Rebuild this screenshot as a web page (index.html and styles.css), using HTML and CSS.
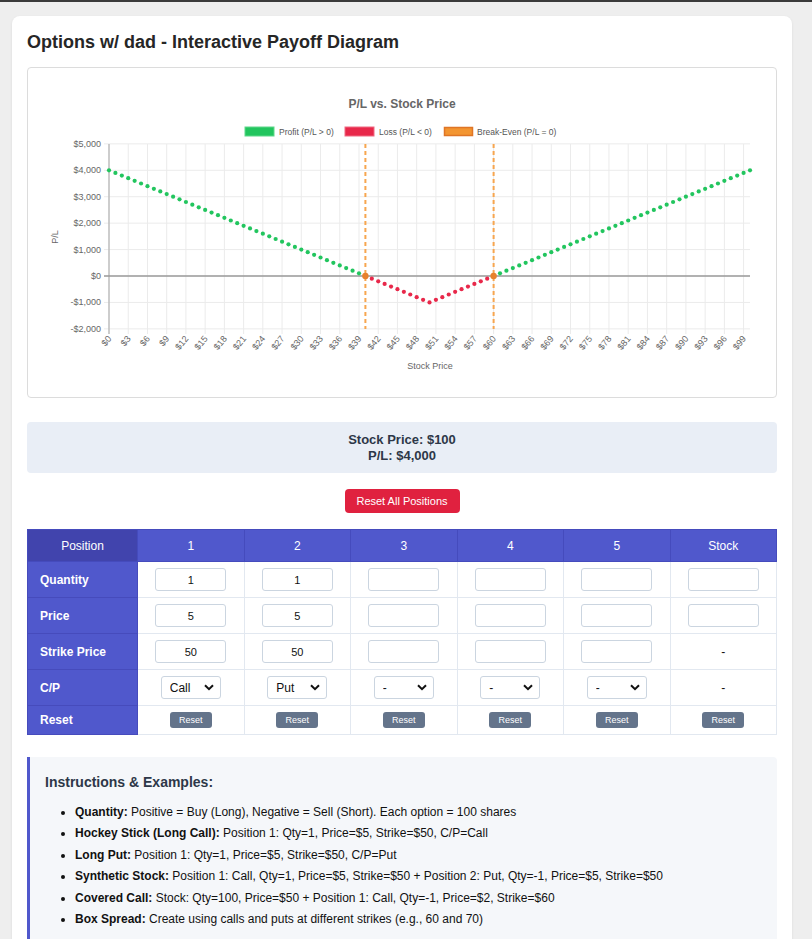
FILE: index.html
```html
<!DOCTYPE html>
<html lang="en">
<head>
<meta charset="utf-8">
<title>Options w/ dad - Interactive Payoff Diagram</title>
<link rel="stylesheet" href="styles.css">
</head>
<body>
<div class="card">
  <h1 class="page-title">Options w/ dad - Interactive Payoff Diagram</h1>

  <div class="chart-box">
    <svg id="chart" class="chart" width="748" height="329" viewBox="0 0 748 329" xmlns="http://www.w3.org/2000/svg">
      <text x="374" y="40" class="c-title" text-anchor="middle">P/L vs. Stock Price</text>
      <rect x="217" y="59" width="29" height="9" fill="#22c55e" stroke="#5ed88a" stroke-width="1"/>
      <text x="251" y="66.5" class="c-legend">Profit (P/L &gt; 0)</text>
      <rect x="317" y="59" width="29" height="9" fill="#e8284a" stroke="#f06a82" stroke-width="1"/>
      <text x="351" y="66.5" class="c-legend">Loss (P/L &lt; 0)</text>
      <rect x="416.5" y="59.5" width="28" height="8" fill="#f39531" stroke="#df7526" stroke-width="1.5"/>
      <text x="449" y="66.5" class="c-legend">Break-Even (P/L = 0)</text>
      <text x="30" y="169" class="c-axis-title" text-anchor="middle" transform="rotate(-90 30 169)">P/L</text>
      <text x="402" y="301" class="c-axis-title" text-anchor="middle">Stock Price</text>
    </svg>
  </div>

  <div class="info-box">
    <div>Stock Price: $100</div>
    <div>P/L: $4,000</div>
  </div>

  <div class="reset-all-wrap">
    <button class="btn-reset-all">Reset All Positions</button>
  </div>

  <table class="positions">
    <colgroup>
      <col class="col-label">
      <col><col><col><col><col><col>
    </colgroup>
    <thead>
      <tr>
        <th class="th-corner">Position</th>
        <th>1</th><th>2</th><th>3</th><th>4</th><th>5</th><th>Stock</th>
      </tr>
    </thead>
    <tbody>
      <tr>
        <td class="row-label">Quantity</td>
        <td><input class="num" type="text" value="1"></td>
        <td><input class="num" type="text" value="1"></td>
        <td><input class="num" type="text" value=""></td>
        <td><input class="num" type="text" value=""></td>
        <td><input class="num" type="text" value=""></td>
        <td><input class="num" type="text" value=""></td>
      </tr>
      <tr>
        <td class="row-label">Price</td>
        <td><input class="num" type="text" value="5"></td>
        <td><input class="num" type="text" value="5"></td>
        <td><input class="num" type="text" value=""></td>
        <td><input class="num" type="text" value=""></td>
        <td><input class="num" type="text" value=""></td>
        <td><input class="num" type="text" value=""></td>
      </tr>
      <tr>
        <td class="row-label">Strike Price</td>
        <td><input class="num" type="text" value="50"></td>
        <td><input class="num" type="text" value="50"></td>
        <td><input class="num" type="text" value=""></td>
        <td><input class="num" type="text" value=""></td>
        <td><input class="num" type="text" value=""></td>
        <td class="dash">-</td>
      </tr>
      <tr>
        <td class="row-label">C/P</td>
        <td><span class="sel-wrap"><select class="sel"><option>Call</option><option>Put</option><option>-</option></select><svg class="chev" width="10" height="7" viewBox="0 0 10 7"><path d="M1 1.2 L5 5.2 L9 1.2" fill="none" stroke="#111" stroke-width="2"/></svg></span></td>
        <td><span class="sel-wrap"><select class="sel"><option>Put</option><option>Call</option><option>-</option></select><svg class="chev" width="10" height="7" viewBox="0 0 10 7"><path d="M1 1.2 L5 5.2 L9 1.2" fill="none" stroke="#111" stroke-width="2"/></svg></span></td>
        <td><span class="sel-wrap"><select class="sel"><option>-</option><option>Call</option><option>Put</option></select><svg class="chev" width="10" height="7" viewBox="0 0 10 7"><path d="M1 1.2 L5 5.2 L9 1.2" fill="none" stroke="#111" stroke-width="2"/></svg></span></td>
        <td><span class="sel-wrap"><select class="sel"><option>-</option><option>Call</option><option>Put</option></select><svg class="chev" width="10" height="7" viewBox="0 0 10 7"><path d="M1 1.2 L5 5.2 L9 1.2" fill="none" stroke="#111" stroke-width="2"/></svg></span></td>
        <td><span class="sel-wrap"><select class="sel"><option>-</option><option>Call</option><option>Put</option></select><svg class="chev" width="10" height="7" viewBox="0 0 10 7"><path d="M1 1.2 L5 5.2 L9 1.2" fill="none" stroke="#111" stroke-width="2"/></svg></span></td>
        <td class="dash">-</td>
      </tr>
      <tr class="reset-row">
        <td class="row-label">Reset</td>
        <td><button class="btn-reset">Reset</button></td>
        <td><button class="btn-reset">Reset</button></td>
        <td><button class="btn-reset">Reset</button></td>
        <td><button class="btn-reset">Reset</button></td>
        <td><button class="btn-reset">Reset</button></td>
        <td><button class="btn-reset">Reset</button></td>
      </tr>
    </tbody>
  </table>

  <div class="instructions">
    <h3 class="instr-title">Instructions &amp; Examples:</h3>
    <ul class="instr-list">
      <li><strong>Quantity:</strong> Positive = Buy (Long), Negative = Sell (Short). Each option = 100 shares</li>
      <li><strong>Hockey Stick (Long Call):</strong> Position 1: Qty=1, Price=$5, Strike=$50, C/P=Call</li>
      <li><strong>Long Put:</strong> Position 1: Qty=1, Price=$5, Strike=$50, C/P=Put</li>
      <li><strong>Synthetic Stock:</strong> Position 1: Call, Qty=1, Price=$5, Strike=$50 + Position 2: Put, Qty=-1, Price=$5, Strike=$50</li>
      <li><strong>Covered Call:</strong> Stock: Qty=100, Price=$50 + Position 1: Call, Qty=-1, Price=$2, Strike=$60</li>
      <li><strong>Box Spread:</strong> Create using calls and puts at different strikes (e.g., 60 and 70)</li>
    </ul>
  </div>
</div>
<script src="script.js"></script>
</body>
</html>
```

FILE: styles.css
```css
html, body {
  margin: 0;
  padding: 0;
}
body {
  background: #eeeeee;
  border-top: 2px solid #3a3a3a;
  padding: 14px 20px 20px 12px;
  font-family: "Liberation Sans", Arial, sans-serif;
  color: #222;
}
.card {
  background: #ffffff;
  border-radius: 8px;
  box-shadow: 0 1px 3px rgba(0, 0, 0, 0.08);
  padding: 15px 15px 20px 15px;
}
.page-title {
  margin: 0 0 14px 0;
  font-size: 18px;
  line-height: 22px;
  font-weight: bold;
  color: #262626;
}
.chart-box {
  border: 1px solid #dcdcdc;
  border-radius: 4px;
  height: 329px;
  margin-bottom: 24px;
}
.chart {
  display: block;
}
.c-title {
  font-family: "Liberation Sans", Arial, sans-serif;
  font-size: 12px;
  font-weight: bold;
  fill: #666666;
}
.c-legend {
  font-family: "Liberation Sans", Arial, sans-serif;
  font-size: 8.5px;
  fill: #555555;
}
.c-tick {
  font-family: "Liberation Sans", Arial, sans-serif;
  font-size: 9px;
  fill: #666666;
}
.c-axis-title {
  font-family: "Liberation Sans", Arial, sans-serif;
  font-size: 9px;
  fill: #666666;
}
.info-box {
  background: #e9eef6;
  border-radius: 4px;
  padding: 10px;
  height: 31px;
  text-align: center;
  font-weight: bold;
  font-size: 13px;
  line-height: 15.5px;
  color: #2d3748;
  margin-bottom: 16px;
}
.reset-all-wrap {
  display: flex;
  justify-content: center;
  margin-bottom: 16px;
}
.btn-reset-all {
  background: #e0213f;
  color: #ffffff;
  border: none;
  border-radius: 4px;
  height: 24px;
  width: 115px;
  font-family: "Liberation Sans", Arial, sans-serif;
  font-size: 11px;
  padding: 0;
}
.positions {
  width: 100%;
  border-collapse: collapse;
  table-layout: fixed;
  margin-bottom: 22px;
}
.col-label {
  width: 110px;
}
.positions th {
  background: #5058cc;
  color: #ffffff;
  font-weight: normal;
  font-size: 12px;
  height: 31px;
  padding: 0;
  border: 1px solid #454bbd;
  text-align: center;
}
.positions th.th-corner {
  background: #4144ad;
}
.positions td {
  border: 1px solid #e2e8f0;
  height: 35px;
  padding: 0;
  text-align: center;
  font-size: 12px;
}
.positions td.row-label {
  background: #5058cc;
  color: #ffffff;
  font-weight: bold;
  text-align: left;
  padding-left: 12px;
  border: 1px solid #464bbc;
}
.positions tr.reset-row td {
  height: 28px;
}
.positions td.dash {
  color: #111;
}
.num {
  box-sizing: border-box;
  width: 71px;
  height: 23px;
  border: 1px solid #cbd5e0;
  border-radius: 3px;
  text-align: center;
  font-family: "Liberation Sans", Arial, sans-serif;
  font-size: 11px;
  color: #111;
  padding: 0;
  vertical-align: middle;
  background: #fff;
}
.sel-wrap {
  position: relative;
  display: inline-block;
  vertical-align: middle;
}
.sel {
  -webkit-appearance: none;
  appearance: none;
  box-sizing: border-box;
  width: 60px;
  height: 23px;
  border: 1px solid #cbd5e0;
  border-radius: 3px;
  background: #ffffff;
  font-family: "Liberation Sans", Arial, sans-serif;
  font-size: 12px;
  color: #111;
  padding: 0 0 0 8px;
  display: block;
}
.chev {
  position: absolute;
  right: 7px;
  top: 8px;
  pointer-events: none;
}
.btn-reset {
  background: #64748b;
  color: #ffffff;
  border: none;
  border-radius: 3px;
  width: 42px;
  height: 16px;
  font-family: "Liberation Sans", Arial, sans-serif;
  font-size: 9px;
  padding: 0;
  vertical-align: middle;
}
.instructions {
  background: #f5f7fa;
  border-left: 3px solid #5058cc;
  border-radius: 0 4px 4px 0;
  padding: 16px 15px 16px 15px;
}
.instr-title {
  margin: 0;
  font-size: 14px;
  line-height: 18px;
  font-weight: bold;
  color: #2d3748;
}
.instr-list {
  margin: 11px 0 0 0;
  padding-left: 30px;
  font-size: 12px;
  line-height: 21.4px;
  color: #111;
}
.instr-list strong {
  color: #111;
}
```

FILE: script.js
```js
(function () {
  var svg = document.getElementById('chart');
  var NS = 'http://www.w3.org/2000/svg';
  var x0 = 81, dx = 6.41, yZero = 208, per = 26.43;
  function X(i) { return x0 + i * dx; }
  function Y(v) { return yZero - v / 1000 * per; }
  function fmt(v) {
    var a = Math.abs(v);
    var s = a >= 1000 ? Math.floor(a / 1000) + ',' + ('00' + (a % 1000)).slice(-3) : String(a);
    return (v < 0 ? '-' : '') + '$' + s;
  }
  var g = document.createElementNS(NS, 'g');
  svg.appendChild(g);
  function add(tag, attrs, text) {
    var e = document.createElementNS(NS, tag);
    for (var k in attrs) e.setAttribute(k, attrs[k]);
    if (text !== undefined) e.textContent = text;
    g.appendChild(e);
    return e;
  }
  for (var v = -2000; v <= 5000; v += 1000) {
    var y = Y(v);
    add('line', { x1: 76, x2: 722, y1: y, y2: y, stroke: '#ebebeb', 'stroke-width': 1 });
    add('text', { x: 73, y: y + 3, 'class': 'c-tick', 'text-anchor': 'end' }, fmt(v));
  }
  for (var i = 0; i <= 99; i += 3) {
    var x = X(i);
    add('line', { x1: x, x2: x, y1: 76, y2: 266, stroke: '#ebebeb', 'stroke-width': 1 });
    var tx = x + 3, ty = 271;
    add('text', { x: tx, y: ty, 'class': 'c-tick', 'text-anchor': 'end', transform: 'rotate(-50 ' + tx + ' ' + ty + ')' }, '$' + i);
  }
  add('line', { x1: x0, x2: x0, y1: 76, y2: 266, stroke: '#b3b3b3', 'stroke-width': 1.2 });
  add('line', { x1: 76, x2: 722, y1: yZero, y2: yZero, stroke: '#9a9a9a', 'stroke-width': 1.3 });
  [40, 60].forEach(function (b) {
    add('line', { x1: X(b), x2: X(b), y1: 76, y2: 261, stroke: '#f7a64f', 'stroke-width': 2, 'stroke-dasharray': '4 3' });
  });
  for (var s = 0; s <= 100; s++) {
    var pl = 100 * (Math.abs(s - 50) - 10);
    var col = pl > 0 ? '#22c55e' : (pl < 0 ? '#e8284a' : '#e8812c');
    var r = pl === 0 ? 3.2 : 2.1;
    add('circle', { cx: X(s), cy: Y(pl), r: r, fill: col });
  }
})();
```
